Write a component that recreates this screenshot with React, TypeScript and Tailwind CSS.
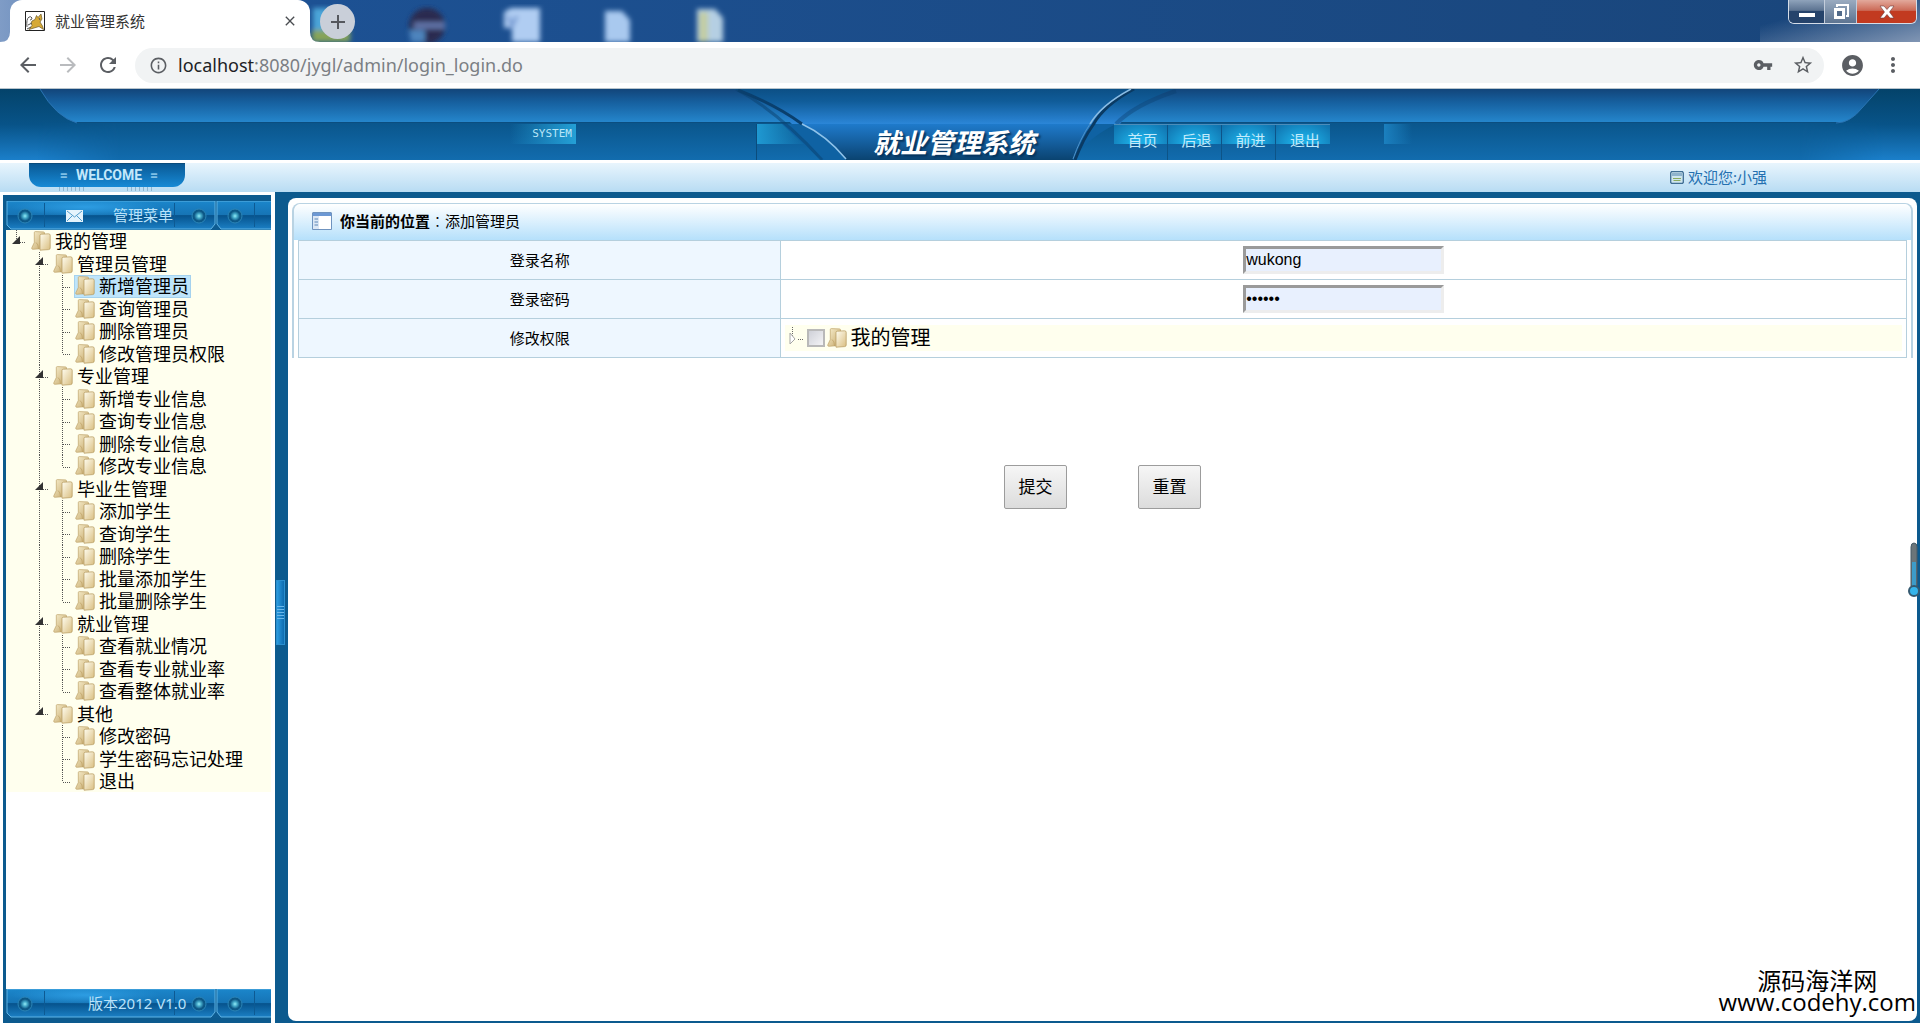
import React from "react";
import {
  MdArrowBack,
  MdArrowForward,
  MdRefresh,
  MdInfoOutline,
  MdVpnKey,
  MdStarBorder,
  MdAccountCircle,
  MdMoreVert,
  MdClose,
  MdAdd,
} from "react-icons/md";

type MenuItem = {
  level: 0 | 1 | 2;
  name: string;
  last?: boolean;
  active?: boolean;
};

const menu: MenuItem[] = [
  { level: 0, name: "我的管理" },
  { level: 1, name: "管理员管理" },
  { level: 2, name: "新增管理员", active: true },
  { level: 2, name: "查询管理员" },
  { level: 2, name: "删除管理员" },
  { level: 2, name: "修改管理员权限", last: true },
  { level: 1, name: "专业管理" },
  { level: 2, name: "新增专业信息" },
  { level: 2, name: "查询专业信息" },
  { level: 2, name: "删除专业信息" },
  { level: 2, name: "修改专业信息", last: true },
  { level: 1, name: "毕业生管理" },
  { level: 2, name: "添加学生" },
  { level: 2, name: "查询学生" },
  { level: 2, name: "删除学生" },
  { level: 2, name: "批量添加学生" },
  { level: 2, name: "批量删除学生", last: true },
  { level: 1, name: "就业管理" },
  { level: 2, name: "查看就业情况" },
  { level: 2, name: "查看专业就业率" },
  { level: 2, name: "查看整体就业率", last: true },
  { level: 1, name: "其他", last: true },
  { level: 2, name: "修改密码" },
  { level: 2, name: "学生密码忘记处理" },
  { level: 2, name: "退出", last: true },
];

const navLinks = ["首页", "后退", "前进", "退出"];

const FolderIcon: React.FC = () => (
  <svg width="20" height="20" viewBox="0 0 20 20" className="shrink-0">
    <defs>
      <linearGradient id="folderBack" x1="0" y1="0" x2="1" y2="1">
        <stop offset="0" stopColor="#f8efcf" />
        <stop offset="1" stopColor="#c5a869" />
      </linearGradient>
      <linearGradient id="folderFront" x1="0" y1="0" x2="1" y2="1">
        <stop offset="0" stopColor="#fffdf0" />
        <stop offset="1" stopColor="#d9be80" />
      </linearGradient>
    </defs>
    <path d="M3.300 1.600Q3.300 .6 4.300 .6L12.500 .9Q13.500 1 13.500 2V17.500L1.800 18.300Q.4 18.300 .8 16.800L3.300 11.500Z" fill="url(#folderBack)" stroke="#bfa46a" strokeWidth=".7" />
    <path d="M5 11.500Q7.500 13 7.500 18" fill="none" stroke="#b7985a" strokeWidth=".6" />
    <path d="M9 4.600Q9 3.300 10.300 3.200L17.500 2.800Q19.200 2.800 19.200 4.300V17Q19.200 18.500 17.600 18.600L9 19.200Z" fill="url(#folderFront)" stroke="#b3965a" strokeWidth=".7" />
  </svg>
);

const MenuRow: React.FC<{ item: MenuItem; inTrunk: boolean }> = ({ item, inTrunk }) => (
  <li className="flex items-center odd:h-[22px] even:h-[23px]">
    <svg width={item.level === 0 ? 24 : item.level === 1 ? 46 : 68} height="23" className="shrink-0 self-start">
      {item.level === 0 && (
        <g>
          <path d="M10.500 0V12M12 12.500H20" stroke="#555" strokeDasharray="1 1" />
          <path d="M6 14L14 6V14Z" fill="#333" />
        </g>
      )}
      {item.level === 1 && (
        <g>
          <path d={item.last ? "M33.500 0V12M35 12.500H43" : "M33.500 0V23M35 12.500H43"} stroke="#555" strokeDasharray="1 1" />
          <path d="M29 13L37 5V13Z" fill="#333" />
        </g>
      )}
      {item.level === 2 && (
        <g>
          {inTrunk && <path d="M33.500 0V23" stroke="#555" strokeDasharray="1 1" />}
          <path d={item.last ? "M56.500 0V12M57 12.500H65" : "M56.500 0V23M57 12.500H65"} stroke="#555" strokeDasharray="1 1" />
        </g>
      )}
    </svg>
    <a
      href="#"
      className={
        item.active
          ? "flex h-[23px] items-center border border-[#a5d2ee] bg-[#bee5fb] pr-px"
          : "flex h-[23px] items-center border border-transparent pr-px"
      }
    >
      <FolderIcon />
      <span className="ml-1 text-[18px] leading-[22px] whitespace-nowrap">{item.name}</span>
    </a>
  </li>
);

// Blue glass bar used at both ends of the side menu
const GlassBar: React.FC<{ id: string; children: React.ReactNode }> = ({ id, children }) => (
  <div className="relative h-[29px] shrink-0 overflow-hidden bg-[#0d5c92]">
    <svg width="265" height="29" className="absolute inset-0">
      <defs>
        <linearGradient id={id} x1="0" y1="0" x2="0" y2="1">
          <stop offset="0" stopColor="#1b86cb" />
          <stop offset=".5" stopColor="#1674b5" />
          <stop offset=".52" stopColor="#06538d" />
          <stop offset="1" stopColor="#1b7fc4" />
        </linearGradient>
        <radialGradient id={id + "Glow"}>
          <stop offset="0" stopColor="#2fa0e6" stopOpacity=".9" />
          <stop offset="1" stopColor="#2fa0e6" stopOpacity="0" />
        </radialGradient>
        <radialGradient id={id + "Knob"}>
          <stop offset="0" stopColor="#93ecf7" />
          <stop offset=".45" stopColor="#44a9c9" />
          <stop offset="1" stopColor="#0c5583" />
        </radialGradient>
      </defs>
      <path d="M1 0H209V23L205 28H5L1 24Z" fill={`url(#${id})`} stroke="#5fb3e4" />
      <path d="M211 0H270V28H215L211 23Z" fill={`url(#${id})`} stroke="#5fb3e4" />
      <ellipse cx="80" cy="6" rx="75" ry="9" fill={`url(#${id}Glow)`} />
      <path d="M38.500 2V26M168.500 2V26M248.500 2V26" stroke="#0d5a93" />
      {[19, 193, 229].map((x) => (
        <g key={x}>
          <circle cx={x} cy="15" r="7" fill="#0c5888" stroke="#2b85b8" />
          <circle cx={x} cy="15" r="5" fill={`url(#${id}Knob)`} />
        </g>
      ))}
    </svg>
    <div className="relative flex h-full items-center text-[15px] text-[#b9e2fa]">{children}</div>
  </div>
);

const BrowserChrome: React.FC = () => (
  <div className="font-['Noto_Sans','Noto_Sans_CJK_SC',sans-serif]">
    <div className="relative flex h-[42px] overflow-hidden bg-linear-to-r from-[#7f9cc6] via-[#1d5295] via-10% to-[#19457a]">
      <div className="absolute inset-y-0 right-0 w-[160px] bg-linear-to-br from-transparent from-30% to-[#8196b4]" />
      <svg width="760" height="42" className="absolute top-0 left-0">
        <defs>
          <filter id="aero">
            <feGaussianBlur stdDeviation="2.500" />
          </filter>
        </defs>
        <g filter="url(#aero)">
          <path d="M313 8H330V42H313Z" fill="#4ba5d8" />
          <path d="M312 30H350V42H312Z" fill="#86a458" />
          <circle cx="427" cy="26" r="18" fill="#2b2c50" />
          <path d="M414 22H445V29H414Z" fill="#5f71a5" />
          <path d="M409 30H425V42H411Z" fill="#4d84bd" />
          <path d="M511 8H540V42H512V28H504V12Z" fill="#b0cdf2" />
          <path d="M508 16L512 26L517 16" fill="none" stroke="#6f95d0" strokeWidth="3" />
          <path d="M605 11H622L630 20V42H605Z" fill="#a9c9ef" />
          <path d="M697 9H715L723 18V42H697Z" fill="#b5cfe3" />
          <path d="M699 12H708V42H699Z" fill="#c2cda3" />
        </g>
        <path d="M0 42Q10 42 10 32V42Z" fill="#fff" />
        <path d="M320 42Q310 42 310 32V42Z" fill="#fff" />
      </svg>
      <div className="relative ml-[10px] flex w-[300px] items-center rounded-t-xl bg-white px-3">
        <svg width="20" height="20" viewBox="0 0 20 20" className="ml-[3px] shrink-0">
          <path d="M.5 .5H19.500V19.500H.5Z" fill="#fff" stroke="#222" />
          <path d="M7 10L10 8.500L11.500 4.500L13 6.500L16 3L17 8L15 11L17.500 15L18.500 18.500L14 15.500L9 17L4 18.500L7 14.500L6 12Z" fill="#d6a936" stroke="#6d5a2a" strokeWidth=".7" />
          <path d="M2 16Q1 8 4 6Q6 5 7 7Q7 9 5 9M3 14L7 12M2 18L6 16M14 7L15 9" fill="none" stroke="#555" />
        </svg>
        <span className="ml-[10px] flex-1 text-[15px] text-[#333]">就业管理系统</span>
        <button aria-label="关闭标签页" className="text-[#4a4d51]">
          <MdClose size={16} />
        </button>
      </div>
      <button
        aria-label="新标签页"
        className="relative ml-[10px] mt-1 flex h-[35px] w-[35px] items-center justify-center rounded-full bg-[#c9cfd9] text-[#55585e]"
      >
        <MdAdd size={24} />
      </button>
      <div className="relative mr-[3px] ml-auto flex h-6 overflow-hidden rounded-b-md border border-t-0 border-[#d5dde8] text-white">
        <button aria-label="最小化" className="flex w-9 items-end justify-center border-r border-[#c3cddb] bg-linear-to-b from-[#8fa3bb] via-[#5c7391] via-45% to-[#25436b] to-50% pb-[6px]">
          <span className="h-1 w-4 bg-white" />
        </button>
        <button aria-label="还原" className="flex w-8 items-center justify-center border-r border-[#c3cddb] bg-linear-to-b from-[#9aabc0] to-[#5d7491]">
          <svg width="18" height="18" viewBox="0 0 18 18">
            <path d="M5 4V2H16V13H14" fill="none" stroke="#fff" strokeWidth="2" />
            <path d="M3.500 6.500H11.500V14.500H3.500Z" fill="#526b8a" stroke="#fff" strokeWidth="3" />
          </svg>
        </button>
        <button aria-label="关闭" className="flex w-[59px] items-center justify-center bg-linear-to-b from-[#e2a99c] via-[#cb6a57] via-45% to-[#c23a20] to-50%">
          <svg width="16" height="14" viewBox="0 0 16 14">
            <path d="M1 1H5L8 4.500L11 1H15L10.500 7L15 13H11L8 9.500L5 13H1L5.500 7Z" fill="#fff" stroke="#6b3a3a" strokeWidth=".6" />
          </svg>
        </button>
      </div>
    </div>
    <div className="flex h-[47px] items-center gap-4 border-b border-[#b8c4cc] bg-white px-4 text-[#5b5e63]">
      <button aria-label="后退"><MdArrowBack size={24} /></button>
      <button aria-label="前进" className="text-[#b9bbbe]"><MdArrowForward size={24} /></button>
      <button aria-label="刷新"><MdRefresh size={24} /></button>
      <div className="-ml-[1px] flex h-[35px] flex-1 items-center rounded-full bg-[#f1f3f4] pr-[10px] pl-[14px]">
        <MdInfoOutline size={19} />
        <div className="ml-[10px] flex-1 text-[18px]">
          <span className="text-[#202124]">localhost</span>
          <span className="text-[#7b7f84]">:8080/jygl/admin/login_login.do</span>
        </div>
        <button aria-label="密码"><MdVpnKey size={20} /></button>
        <button aria-label="收藏" className="ml-[19px]"><MdStarBorder size={22} /></button>
      </div>
      <button aria-label="用户"><MdAccountCircle size={25} /></button>
      <button aria-label="更多" className="-mr-px"><MdMoreVert size={24} /></button>
    </div>
  </div>
);

const Banner: React.FC = () => (
  <header>
    <div className="relative flex h-[71px] overflow-hidden bg-linear-to-b from-[#0a568c] from-48% to-[#126cae]">
      <div className="absolute inset-x-0 top-0 h-[34px] border-b border-[#0b4e80] bg-linear-to-b from-[#12457a] via-[#16609f] via-40% to-[#2586cc]" />
      <svg width="120" height="71" className="relative shrink-0">
        <defs>
          <linearGradient id="cornerFill" gradientUnits="userSpaceOnUse" x1="0" y1="0" x2="0" y2="71">
            <stop offset="0" stopColor="#04436a" />
            <stop offset=".5" stopColor="#085388" />
            <stop offset="1" stopColor="#1b7fca" />
          </linearGradient>
          <linearGradient id="cornerFade">
            <stop offset=".3" stopColor="#fff" />
            <stop offset="1" stopColor="#000" />
          </linearGradient>
          <mask id="cornerMask">
            <path d="M0 0H120V71H0Z" fill="url(#cornerFade)" />
          </mask>
        </defs>
        <path d="M0 0H40Q56 28 77 34H0Z" fill="url(#cornerFill)" />
        <path d="M0 34H120V71H0Z" fill="url(#cornerFill)" mask="url(#cornerMask)" />
        <path d="M40 0Q56 28 77 34" fill="none" stroke="#2a74b4" />
      </svg>
      <div className="relative ml-[390px] mt-[35px] flex h-5 w-[66px] shrink-0 items-center justify-end bg-linear-to-r from-transparent to-[#24a0d6] pr-1 font-['DejaVu_Sans_Mono',monospace] text-[11px] text-[#b9e6f8]">
        SYSTEM
      </div>
      <div className="relative ml-[154px] w-[384px] shrink-0">
        <svg width="460" height="71" className="absolute top-0 left-0">
          <defs>
            <linearGradient id="plateTop" x1="0" y1="0" x2="0" y2="1">
              <stop offset="0" stopColor="#0c4f85" />
              <stop offset=".35" stopColor="#105c99" />
              <stop offset="1" stopColor="#2b86d8" />
            </linearGradient>
            <linearGradient id="plateBottom" x1="0" y1="0" x2="0" y2="1">
              <stop offset="0" stopColor="#1f7acb" />
              <stop offset=".5" stopColor="#155f9f" />
              <stop offset="1" stopColor="#0a4370" />
            </linearGradient>
            <linearGradient id="glowLeft">
              <stop offset="0" stopColor="#1f9ad3" />
              <stop offset="1" stopColor="#1f9ad3" stopOpacity="0" />
            </linearGradient>
          </defs>
          <path d="M26 35H78V55H26Z" fill="url(#glowLeft)" />
          <path d="M26.500 35V71" stroke="#0b4c7c" />
          <path d="M4 0Q40 14 62 35H390Q404 14 444 0Z" fill="url(#plateTop)" />
          <path d="M52 35Q74 56 92 71H344Q356 50 386 35Z" fill="#0f62a3" />
          <path d="M72 35Q100 48 116 71H343Q350 50 362 35Z" fill="url(#plateBottom)" />
          <path d="M6 0Q50 24 92 71" fill="none" stroke="#0a3f6d" strokeOpacity=".5" strokeWidth="3" />
          <path d="M8 1Q46 16 72 35" fill="none" stroke="#0a3f6d" strokeWidth="3" />
          <path d="M72 35Q96 46 116 70" fill="none" stroke="#8fc3ea" strokeWidth="1.500" />
          <path d="M446 2Q404 16 386 35" fill="none" stroke="#0a3f6d" strokeOpacity=".4" strokeWidth="4" />
          <path d="M404 0Q374 16 363 36Q353 50 345 71" fill="none" stroke="#0a3a63" strokeWidth="3" />
          <path d="M401 0Q371 16 360 35" fill="none" stroke="#8abce4" strokeWidth="1.500" />
          <path d="M360 35Q350 50 343 70" fill="none" stroke="#4f93cb" />
        </svg>
        <h1 className="relative mt-[38px] ml-[143px] text-[27px] leading-8 font-bold whitespace-nowrap text-white italic [text-shadow:2px_2px_2px_#06335c]">
          就业管理系统
        </h1>
      </div>
      <nav className="relative mt-[35px] flex h-9 border-t border-[#4c8dba] text-[15px] text-[#c4ebfb]">
        {navLinks.map((link) => (
          <a
            key={link}
            href="#"
            className="flex w-[54px] items-start justify-center border-r border-[#0d5488] bg-[radial-gradient(ellipse_at_bottom,#1cabe3_25%,#0f6fab)] [background-size:100%_19px] bg-no-repeat pt-1 pl-1 last:border-0"
          >
            {link}
          </a>
        ))}
      </nav>
      <div className="relative mt-[35px] ml-[54px] h-5 w-7 bg-linear-to-r from-[#1b80bf] to-transparent" />
      <svg width="120" height="71" className="relative ml-auto shrink-0">
        <path d="M120 0H79L62 19Q50 34 36 34H120Z" fill="url(#cornerFill)" />
        <g transform="translate(120 0) scale(-1 1)">
          <path d="M0 34H120V71H0Z" fill="url(#cornerFill)" mask="url(#cornerMask)" />
        </g>
        <path d="M79 0L62 19Q50 34 36 34" fill="none" stroke="#2a74b4" />
      </svg>
    </div>
    <div className="flex h-8 items-start justify-between border-t-[3px] border-white bg-linear-to-b from-[#e8f5fd] to-[#b8dcf3]">
      <div className="ml-[29px] flex flex-col items-center">
        <div className="flex h-6 w-[156px] items-center justify-center gap-2 rounded-b-xl border-t border-[#0a4c7c] bg-linear-to-b from-[#0a5a96] to-[#178ad6] pl-1 font-['Roboto',sans-serif] text-[14px] font-bold text-[#c4e8fb]">
          <span className="text-[#7fc0e6]">=</span>WELCOME<span className="text-[#7fc0e6]">=</span>
        </div>
        <svg width="100" height="4">
          <path d="M2 2H30M70 2H98" stroke="#8fb5cf" strokeWidth="4" strokeDasharray="1 3" />
        </svg>
      </div>
      <div className="mr-[153px] flex h-full items-center gap-1 text-[15px] text-[#2470b0]">
        <svg width="14" height="13" viewBox="0 0 14 13">
          <path d="M1.500 .7H12.500L13.300 2V11.500L12.500 12.300H1.500L.7 11.500V2Z" fill="#cfe6ee" stroke="#3f6d93" strokeWidth="1.300" />
          <path d="M2 3.500H12" stroke="#8fb3cc" strokeWidth="3" />
          <path d="M3 7.500H11M3.500 9.500H10.500" stroke="#8bab5f" />
        </svg>
        欢迎您:小强
      </div>
    </div>
  </header>
);

const SideMenu: React.FC = () => {
  const lastBranch = menu.findIndex((item) => item.level === 1 && item.last);
  return (
    <aside className="flex w-[275px] shrink-0 bg-white pt-[3px] pr-1 pl-[3px]">
      <div className="flex flex-1 flex-col border-t-[6px] border-b-[5px] border-l-[3px] border-[#0c5a8e]">
        <GlassBar id="barTop">
          <svg width="17" height="12" viewBox="0 0 17 12" className="ml-[60px]">
            <path d="M0 0H17V12H0Z" fill="#e4f3fc" />
            <path d="M1 1L8.500 7L16 1M1 11L6 6M16 11L11 6" fill="none" stroke="#4f9ccc" />
          </svg>
          <span className="ml-[30px]">管理菜单</span>
        </GlassBar>
        <ul className="bg-[#ffffee] text-black">
          {menu.map((item, i) => (
            <MenuRow key={i} item={item} inTrunk={i < lastBranch} />
          ))}
        </ul>
        <div className="flex-1" />
        <GlassBar id="barBottom">
          <span className="ml-[82px]">版本2012 V1.0</span>
        </GlassBar>
      </div>
    </aside>
  );
};

const inputClass =
  "block h-7 w-[201px] border-[3px] border-t-[#9a9a9a] border-l-[#9a9a9a] border-r-[#ededed] border-b-[#ededed] bg-[#e8f0fe] font-['Liberation_Sans',sans-serif] text-[16px] text-black outline-none";

const AddAdmin: React.FC = () => (
  <main className="mt-[6px] mr-[3px] mb-[2px] flex-1 rounded-lg bg-white px-1 pt-[5px]">
    <form>
      <div className="rounded-t-lg border-x-2 border-t border-[#b9d3e3]">
        <div className="flex h-9 items-center rounded-t-lg bg-linear-to-b from-white to-[#b5e0fb] pb-[2px] pl-[18px] text-[15px] text-black">
          <svg width="20" height="18" viewBox="0 0 20 18">
            <path d="M.5 1Q.5 .5 1 .5H19Q19.500 .5 19.500 1V17.500H.5Z" fill="#fff" stroke="#6f93bf" />
            <path d="M1 1H19V4H1Z" fill="#6c98d4" />
            <path d="M1 4H7V17H1Z" fill="#dbe7f5" />
            <path d="M2.500 7H6M2.500 10H6M2.500 13H6" stroke="#5d86b5" />
          </svg>
          <span className="ml-[8px] font-bold">你当前的位置</span>
          <span className="font-['Noto_Sans_CJK_TC',sans-serif] font-light">：</span>
          <span>添加管理员</span>
        </div>
        <div className="px-1">
          <table className="w-full table-fixed border-collapse text-[15px] text-black">
            <tbody>
              <tr className="h-[39px]">
                <th scope="row" className="w-[30%] border border-[#b5cfdd] bg-[#eef7ff] font-normal">
                  <label htmlFor="name">登录名称</label>
                </th>
                <td className="border border-[#b5cfdd]">
                  <input id="name" type="text" defaultValue="wukong" className={inputClass + " mx-auto"} />
                </td>
              </tr>
              <tr className="h-[39px]">
                <th scope="row" className="border border-[#b5cfdd] bg-[#eef7ff] font-normal">
                  <label htmlFor="password">登录密码</label>
                </th>
                <td className="border border-[#b5cfdd]">
                  <input id="password" type="password" defaultValue="wukong" className={inputClass + " mx-auto"} />
                </td>
              </tr>
              <tr className="h-[39px]">
                <th scope="row" className="border border-[#b5cfdd] bg-[#eef7ff] font-normal">修改权限</th>
                <td className="border border-[#b5cfdd] px-1">
                  <div className="flex h-[26px] items-center bg-[#ffffee] pl-1">
                    <svg width="18" height="22" className="shrink-0">
                      <path d="M3.500 0V10M9 12.500H15" stroke="#666" strokeDasharray="1 1" />
                      <path d="M1 6V17L6 12Z" fill="#fff" stroke="#a5a5a5" />
                    </svg>
                    <input
                      id="allow"
                      type="checkbox"
                      className="h-[18px] w-[18px] shrink-0 appearance-none rounded-none border-2 border-[#b9b9b9] bg-linear-to-br from-[#cfd1d8] to-[#f4f4f6]"
                    />
                    <span className="ml-[2px]"><FolderIcon /></span>
                    <label htmlFor="allow" className="ml-[3px] text-[20px] leading-6">我的管理</label>
                  </div>
                </td>
              </tr>
            </tbody>
          </table>
        </div>
      </div>
      <div className="mt-[107px] flex justify-center gap-[71px] text-[17px] text-black">
        <button type="button" className="h-11 w-[63px] rounded-xs border border-[#9c9c9c] bg-linear-to-b from-[#f6f6f6] to-[#dcdcdc]">
          提交
        </button>
        <button type="reset" className="h-11 w-[63px] rounded-xs border border-[#9c9c9c] bg-linear-to-b from-[#f6f6f6] to-[#dcdcdc]">
          重置
        </button>
      </div>
    </form>
  </main>
);

export default function App() {
  return (
    <div className="relative flex min-h-screen flex-col bg-white font-['Noto_Sans','Noto_Sans_CJK_SC',sans-serif]">
      <BrowserChrome />
      <Banner />
      <div className="flex flex-1 bg-[#0c5a8e]">
        <SideMenu />
        <div className="flex w-[13px] shrink-0 items-center pt-[10px] pl-px">
          <button aria-label="收起菜单" className="flex h-[65px] w-[9px] items-center justify-end border border-[#2b8fcf] bg-linear-to-r from-[#2a9be0] to-[#0d6cb0]">
            <svg width="8" height="18">
              <path d="M0 2.500H8M0 5.500H8M0 8.500H8M0 11.500H8M0 14.500H8" stroke="#6cb8ea" />
            </svg>
          </button>
        </div>
        <AddAdmin />
      </div>
      <svg width="12" height="56" className="absolute right-0 bottom-[425px]">
        <path d="M3 5Q3 1 6 1Q9 1 9 5V44H3Z" fill="#6b7579" stroke="#485a66" />
        <path d="M4 20H8V44H4Z" fill="#3d9cc9" />
        <circle cx="6" cy="49" r="5" fill="#35b4ea" stroke="#355a70" strokeWidth="2" />
      </svg>
      <div className="absolute right-1 bottom-[10px] flex flex-col items-center font-['Open_Sans','Noto_Sans_CJK_SC',sans-serif] text-[24px] text-black">
        <div className="leading-5">源码海洋网</div>
        <div className="leading-[22px] font-medium">www.codehy.com</div>
      </div>
    </div>
  );
}
